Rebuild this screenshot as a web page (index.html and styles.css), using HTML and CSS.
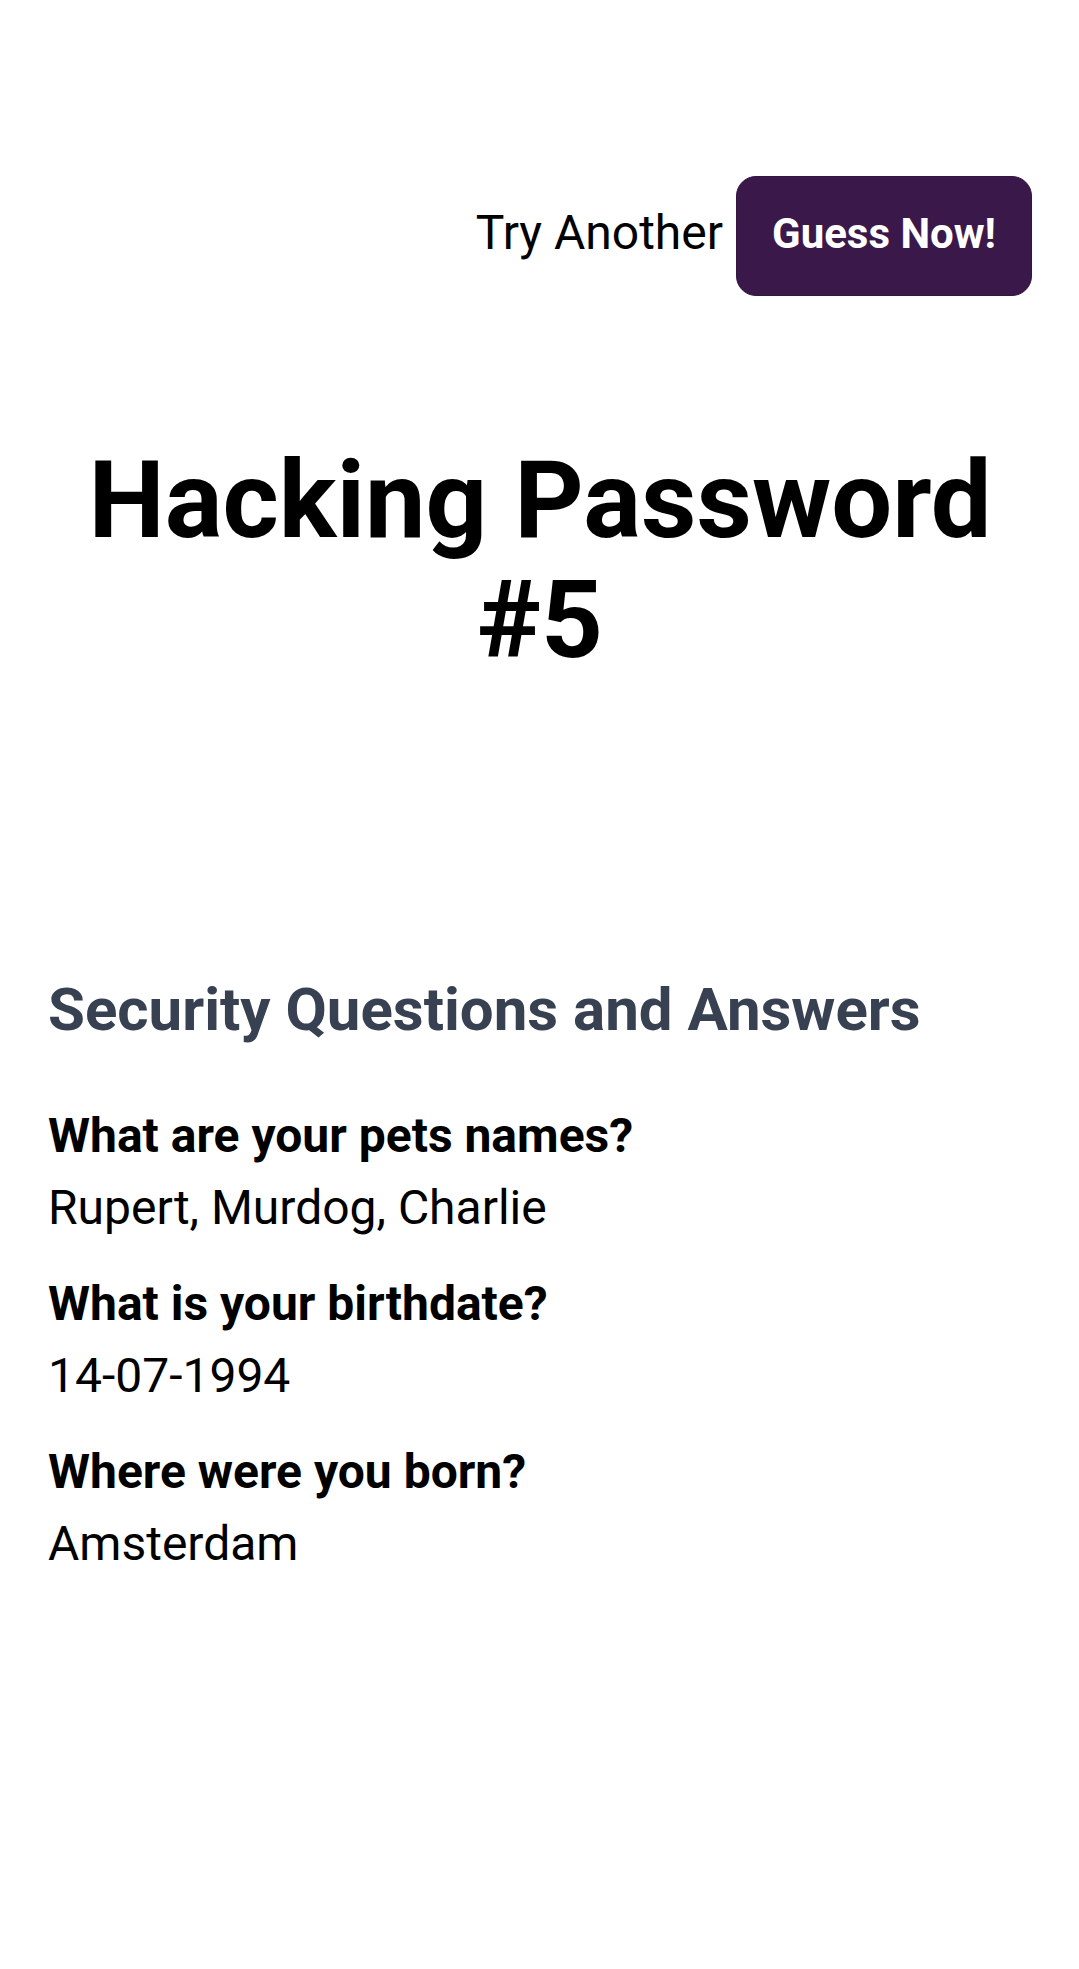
FILE: index.html
```html
<!DOCTYPE html>
<html lang="en">
<head>
<meta charset="utf-8">
<title>Hacking Password #5</title>
<link rel="stylesheet" href="styles.css">
</head>
<body>
<div class="page">
  <header class="topbar">
    <a class="try-link" href="#">Try Another</a>
    <button class="guess-btn" type="button">Guess Now!</button>
  </header>
  <h1 class="title">Hacking Password #5</h1>
  <section class="qa">
    <h2 class="qa-heading">Security Questions and Answers</h2>
    <div class="qa-item">
      <p class="question">What are your pets names?</p>
      <p class="answer">Rupert, Murdog, Charlie</p>
    </div>
    <div class="qa-item">
      <p class="question">What is your birthdate?</p>
      <p class="answer">14-07-1994</p>
    </div>
    <div class="qa-item">
      <p class="question">Where were you born?</p>
      <p class="answer">Amsterdam</p>
    </div>
  </section>
</div>
</body>
</html>
```

FILE: styles.css
```css
* {
  box-sizing: border-box;
}

html, body {
  margin: 0;
  padding: 0;
  background: #ffffff;
}

body {
  font-family: Roboto, "Liberation Sans", Arial, sans-serif;
  color: #000000;
}

.page {
  padding: 176px 47px 0 48px;
}

.topbar {
  display: flex;
  justify-content: flex-end;
  align-items: center;
  gap: 13px;
}

.try-link {
  font-size: 48px;
  line-height: 72px;
  color: #000000;
  text-decoration: none;
  margin-top: -6px;
}

.guess-btn {
  font-family: inherit;
  font-size: 42px;
  line-height: 60px;
  font-weight: 700;
  color: #ffffff;
  background: #3a194a;
  border: 1px solid #33153f;
  border-radius: 20px;
  padding: 27px 0 31px;
  width: 296px;
  height: 120px;
  white-space: nowrap;
  text-align: center;
}

.title {
  margin: 144px 0 0;
  font-size: 108px;
  line-height: 120px;
  font-weight: 700;
  text-align: center;
}

.qa {
  margin-top: 288px;
}

.qa-heading {
  margin: 0 0 48px;
  font-size: 60px;
  line-height: 84px;
  font-weight: 700;
  color: #374151;
}

.qa-item {
  margin-bottom: 24px;
}

.question {
  margin: 0;
  font-size: 48px;
  line-height: 72px;
  font-weight: 700;
}

.answer {
  margin: 0;
  font-size: 48px;
  line-height: 72px;
  font-weight: 400;
}
```
